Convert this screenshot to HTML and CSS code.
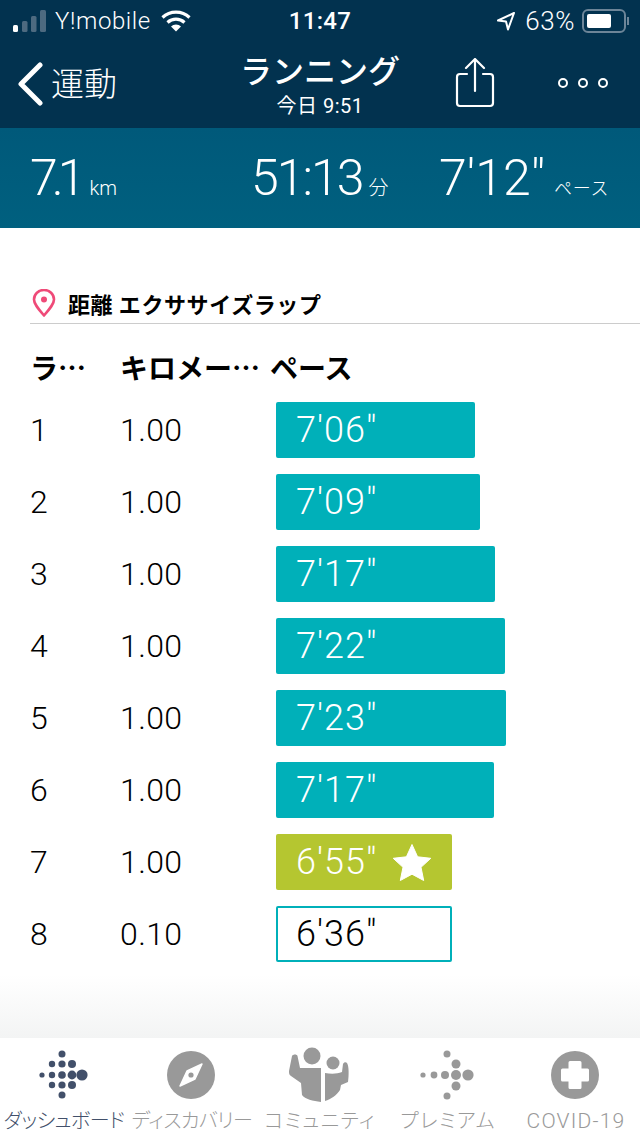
FILE: index.html
```html
<!DOCTYPE html>
<html lang="ja">
<head>
    <meta charset="UTF-8">
    <meta name="viewport" content="width=device-width, initial-scale=1.0">
    <title>ランニング</title>
    <link rel="stylesheet" href="styles.css">
</head>
<body>

    <header class="top">
        <div class="status">
            <div class="status-left">
                <svg class="signal" width="33" height="22" viewBox="0 0 33 22">
                    <rect x="0" y="15" width="5" height="7" rx="1.5" fill="#fff"/>
                    <rect x="9" y="11" width="5.500" height="11" rx="1.5" fill="#4d6a80"/>
                    <rect x="18" y="6" width="5.500" height="16" rx="1.5" fill="#4d6a80"/>
                    <rect x="27" y="0" width="6" height="22" rx="1.5" fill="#4d6a80"/>
                </svg>
                <span class="carrier">Y!mobile</span>
                <svg width="30" height="22" viewBox="0 0 30 22" fill="none" stroke="#fff" stroke-width="3.2">
                    <path d="M1.5 7.5a19.5 19.5 0 0 1 27 0"/>
                    <path d="M6.5 12.5a12.5 12.5 0 0 1 17 0"/>
                    <path d="M15 21.5l-5-5a7 7 0 0 1 10 0z" fill="#fff" stroke="none"/>
                </svg>
            </div>
            <div class="clock">11:47</div>
            <div class="status-right">
                <svg width="20" height="20" viewBox="0 0 20 20" fill="none" stroke="#fff" stroke-width="2" stroke-linejoin="round">
                    <path d="M18 2L2 9.5l8 1 2 8z"/>
                </svg>
                <span class="battery-text">63%</span>
                <div class="battery"><div class="battery-fill"></div></div>
                <div class="battery-tip"></div>
            </div>
        </div>
        <nav class="nav">
            <div class="back">
                <svg width="28" height="44" viewBox="0 0 28 44" fill="none" stroke="#fff" stroke-width="5" stroke-linecap="round" stroke-linejoin="round">
                    <path d="M24 3L5 22l19 19"/>
                </svg>
                <span class="back-label">運動</span>
            </div>
            <div class="nav-title">
                <div class="title-main">ランニング</div>
                <div class="title-sub">今日 9:51</div>
            </div>
            <svg class="share" width="40" height="50" viewBox="0 0 40 50" fill="none" stroke="#fff" stroke-width="2.2" stroke-linecap="round" stroke-linejoin="round">
                <path d="M12 16H5a3 3 0 0 0-3 3v26a3 3 0 0 0 3 3h30a3 3 0 0 0 3-3V19a3 3 0 0 0-3-3h-7"/>
                <path d="M20 33V2M11 10l9-9 9 9"/>
            </svg>
            <div class="more">
                <span class="more-dot"></span>
                <span class="more-dot"></span>
                <span class="more-dot"></span>
            </div>
        </nav>
    </header>

    <section class="stats">
        <div class="stat stat-dist"><span class="stat-num">7.1</span><span class="stat-unit">km</span></div>
        <div class="stat stat-time"><span class="stat-num">51:13</span><span class="stat-unit">分</span></div>
        <div class="stat stat-pace"><span class="stat-num">7'12"</span><span class="stat-unit">ペース</span></div>
    </section>

    <main class="content">
        <div class="section-head">
            <svg class="pin" width="24" height="28" viewBox="0 0 24 28" fill="none" stroke="#ef4a78" stroke-width="2.6">
                <path d="M12 26.500C6 19.500 2 15 2 10.500a10 9.500 0 0 1 20 0C22 15 18 19.500 12 26.500z" stroke-linejoin="round"/>
                <circle cx="12" cy="10.500" r="3" fill="#ef4a78" stroke="none"/>
            </svg>
            <span>距離 エクササイズラップ</span>
        </div>

        <div class="lap-head">
            <span>ラ…</span>
            <span>キロメー…</span>
            <span>ペース</span>
        </div>

        <div class="lap-row">
            <span>1</span><span>1.00</span>
            <div class="bar" style="width: 199px">7'06"</div>
        </div>
        <div class="lap-row">
            <span>2</span><span>1.00</span>
            <div class="bar" style="width: 204px">7'09"</div>
        </div>
        <div class="lap-row">
            <span>3</span><span>1.00</span>
            <div class="bar" style="width: 219px">7'17"</div>
        </div>
        <div class="lap-row">
            <span>4</span><span>1.00</span>
            <div class="bar" style="width: 229px">7'22"</div>
        </div>
        <div class="lap-row">
            <span>5</span><span>1.00</span>
            <div class="bar" style="width: 230px">7'23"</div>
        </div>
        <div class="lap-row">
            <span>6</span><span>1.00</span>
            <div class="bar" style="width: 218px">7'17"</div>
        </div>
        <div class="lap-row">
            <span>7</span><span>1.00</span>
            <div class="bar bar-best" style="width: 176px">6'55"
                <svg class="star" width="40" height="38" viewBox="0 0 40 38">
                    <path d="M20 1.500l5.600 12.300 13.200 1.500-9.800 9 2.700 13.200L20 31.200 8.300 37.500 11 24.300l-9.800-9 13.200-1.500z" fill="#fff" stroke="#fff" stroke-linejoin="round"/>
                </svg>
            </div>
        </div>
        <div class="lap-row">
            <span>8</span><span>0.10</span>
            <div class="bar bar-partial" style="width: 176px">6'36"</div>
        </div>
    </main>

    <div class="fade"></div>

    <footer class="tabs">
        <div class="tab tab-active">
            <svg width="50" height="50" viewBox="2 0 50 50" fill="#42506a">
                <circle cx="25" cy="4" r="3.500"/>
                <circle cx="15" cy="14" r="3.200"/><circle cx="25" cy="14" r="3.600"/><circle cx="35" cy="14" r="4"/>
                <circle cx="5" cy="25" r="2.600"/><circle cx="15" cy="25" r="3.200"/><circle cx="25" cy="25" r="3.800"/><circle cx="35" cy="25" r="4.400"/><circle cx="45" cy="25" r="5.600"/>
                <circle cx="15" cy="35" r="3.200"/><circle cx="25" cy="35" r="3.600"/><circle cx="35" cy="35" r="4"/>
                <circle cx="25" cy="45" r="3.500"/>
            </svg>
            <span class="tab-tight">ダッシュボード</span>
        </div>
        <div class="tab">
            <svg width="50" height="50" viewBox="1 0 50 50">
                <circle cx="25" cy="25" r="24" fill="#999"/>
                <path d="M36 14L29 29 14 36l7-15z" fill="#fff" stroke="#fff" stroke-width="1.500" stroke-linejoin="round"/>
                <circle cx="25" cy="25" r="2.600" fill="#999"/>
            </svg>
            <span class="tab-tight">ディスカバリー</span>
        </div>
        <div class="tab">
            <svg width="64" height="50" viewBox="288 1050 64 50" fill="#999">
                <circle cx="312" cy="1056" r="8.500"/>
                <circle cx="333" cy="1063" r="6.500"/>
                <path d="M292 1056c1-2 5-2 5.500 0l2.500 12h21v34c-8-1-16-3-19-7l-1-12-10-7c-2-1-2-3-2-5z"/>
                <path d="M325 1073c6 1 12 1 17-1l1-8c1-2 3-2 4-1 2 3 2 12 1 19l-7 3-1 5c-3 5-9 9-15 11z"/>
            </svg>
            <span class="tab-wide">コミュニティ</span>
        </div>
        <div class="tab">
            <svg width="50" height="50" viewBox="3 0 50 50" fill="#999">
                <circle cx="27" cy="4" r="3.500"/>
                <circle cx="36" cy="14" r="4.500"/>
                <circle cx="3" cy="25" r="2.600"/><circle cx="14" cy="25" r="3.400"/><circle cx="25" cy="25" r="4"/><circle cx="36" cy="25" r="5"/><circle cx="48" cy="25" r="5.600"/>
                <circle cx="36" cy="36" r="4.500"/>
                <circle cx="27" cy="46" r="3.500"/>
            </svg>
            <span class="tab-wide">プレミアム</span>
        </div>
        <div class="tab">
            <svg width="50" height="50" viewBox="1 0 50 50">
                <circle cx="25" cy="25" r="24" fill="#999"/>
                <path d="M20 11h10a1.500 1.500 0 0 1 1.500 1.500v6h6a1.500 1.500 0 0 1 1.500 1.500v10a1.500 1.500 0 0 1-1.500 1.500h-6v6a1.500 1.500 0 0 1-1.500 1.500H20a1.500 1.500 0 0 1-1.500-1.500v-6h-6a1.500 1.500 0 0 1-1.500-1.500V20a1.500 1.500 0 0 1 1.500-1.500h6v-6a1.500 1.500 0 0 1 1.500-1.500z" fill="#fff"/>
            </svg>
            <span class="tab-latin">COVID-19</span>
        </div>
    </footer>

</body>
</html>
```

FILE: styles.css
```css
* {
    box-sizing: border-box;
}
body {
    margin: 0;
    width: 640px;
    height: 1136px;
    overflow: hidden;
    display: flex;
    flex-direction: column;
    position: relative;
    background: #fff;
    color: #000;
    font-family: Roboto, "Noto Sans CJK JP", sans-serif;
}

/* Header */
.top {
    height: 128px;
    background: #02324f;
    color: #fff;
}
.status {
    height: 40px;
    display: flex;
    align-items: center;
    justify-content: space-between;
    padding: 2px 11px 0 13px;
    position: relative;
    font-size: 24px;
}
.status-left, .status-right {
    display: flex;
    align-items: center;
}
.status-left {
    gap: 9px;
}
.carrier {
    font-weight: 300;
    letter-spacing: 0.6px;
    margin-right: 1px;
}
.clock {
    position: absolute;
    left: 0;
    right: 0;
    text-align: center;
    font-weight: 500;
    letter-spacing: 0.3px;
}
.status-right {
    gap: 7px;
}
.battery-text {
    font-size: 26px;
    font-weight: 300;
    letter-spacing: 0.6px;
    margin: 0 0 0 2px;
}
.battery {
    width: 44px;
    height: 24px;
    border: 2px solid #6d8598;
    border-radius: 6px;
    padding: 3px;
}
.battery-fill {
    width: 24px;
    height: 14px;
    background: #fff;
    border-radius: 2px;
}
.battery-tip {
    width: 2px;
    height: 8px;
    background: #6d8598;
    margin-left: -6px;
}
.nav {
    height: 88px;
    display: flex;
    align-items: center;
    position: relative;
}
.back {
    display: flex;
    align-items: center;
    gap: 7px;
    margin-left: 16px;
    font-size: 33px;
    font-weight: 300;
}
.back-label {
    margin-bottom: 5px;
}
.nav-title {
    position: absolute;
    left: 0;
    right: 0;
    top: 9px;
    text-align: center;
}
.title-main {
    font-size: 32px;
    font-weight: 500;
    line-height: 46px;
}
.title-sub {
    font-size: 20px;
    line-height: 22px;
    letter-spacing: 0.5px;
}
.share {
    position: absolute;
    left: 455px;
    top: 18px;
}
.more {
    position: absolute;
    left: 558px;
    top: 38px;
    display: flex;
    gap: 10px;
}
.more-dot {
    width: 10px;
    height: 10px;
    border: 2px solid #fff;
    border-radius: 50%;
}

/* Stats band */
.stats {
    height: 100px;
    display: grid;
    grid-template-columns: 221px 188px 1fr;
    align-items: center;
    padding-left: 30px;
    background: linear-gradient(#00597a, #00607f);
    color: #fff;
}
.stat {
    display: flex;
    align-items: baseline;
    white-space: nowrap;
}
.stat-num {
    font-size: 50px;
    font-weight: 300;
}
.stat-unit {
    font-size: 20px;
    font-weight: 300;
    margin-left: 9px;
}
.stat-dist .stat-num {
    letter-spacing: -6px;
}
.stat-dist .stat-unit {
    margin-left: 10px;
}
.stat-time .stat-num {
    letter-spacing: -2px;
}
.stat-time .stat-unit {
    margin-left: 6px;
}
.stat-pace .stat-unit {
    font-size: 18px;
    letter-spacing: 0.6px;
}

/* Lap table */
.content {
    padding: 60px 0 0 30px;
}
.section-head {
    height: 36px;
    display: flex;
    align-items: flex-start;
    gap: 12px;
    padding-left: 2px;
    border-bottom: 1px solid #ccc;
    font-family: "Noto Sans CJK JP", sans-serif;
    font-size: 22px;
    font-weight: 700;
    line-height: 31px;
    letter-spacing: 0.6px;
}
.pin {
    margin-top: 1px;
}
.lap-head {
    display: grid;
    grid-template-columns: 90px 150px 1fr;
    height: 78px;
    padding-top: 8px;
    align-items: center;
    font-family: "Noto Sans CJK JP", sans-serif;
    font-size: 28px;
    font-weight: 700;
}
.lap-row {
    display: grid;
    grid-template-columns: 90px 156px 1fr;
    height: 72px;
    align-items: start;
    font-size: 32px;
    font-weight: 300;
    line-height: 56px;
    letter-spacing: 0.4px;
}
.bar {
    height: 56px;
    padding-left: 20px;
    background: #00b0b9;
    color: #fff;
    border-radius: 2px;
    display: flex;
    align-items: center;
    font-size: 36px;
    letter-spacing: 1px;
}
.bar-best {
    background: #b5c630;
}
.star {
    margin-left: 15px;
}
.bar-partial {
    background: #fff;
    color: #000;
    border: 2px solid #00b0b9;
    padding-left: 18px;
}

/* Bottom tabs */
.fade {
    position: absolute;
    left: 0;
    right: 0;
    top: 975px;
    height: 63px;
    background: linear-gradient(rgba(243, 244, 244, 0), #f3f4f4);
}
.tabs {
    position: absolute;
    left: 0;
    right: 0;
    bottom: 0;
    height: 98px;
    display: flex;
    background: #fff;
    color: #999;
}
.tab {
    width: 128px;
    height: 98px;
    padding-top: 12px;
    display: flex;
    flex-direction: column;
    align-items: center;
    font-size: 20px;
    font-weight: 300;
    font-feature-settings: "palt";
    white-space: nowrap;
}
.tab svg {
    height: 50px;
    flex: none;
    overflow: visible;
}
.tab span {
    margin-top: 7px;
    line-height: 28px;
}
.tab .tab-tight {
    letter-spacing: -0.5px;
}
.tab .tab-wide {
    letter-spacing: 1.4px;
}
.tab .tab-latin {
    font-size: 21px;
    letter-spacing: 1.2px;
}
.tab-active {
    color: #42506a;
}
```
